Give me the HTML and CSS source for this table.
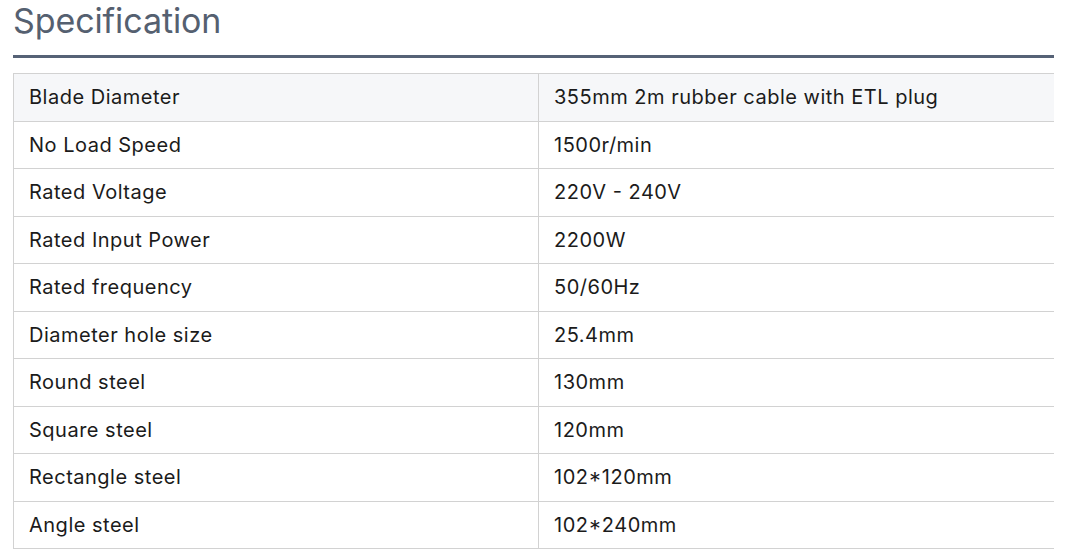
FILE: index.html
```html
<!DOCTYPE html>
<html>
<head>
<meta charset="utf-8">
<link rel="stylesheet" href="styles.css">
</head>
<body>
<div class="spec">
  <h2 class="spec-title">Specification</h2>
  <table class="spec-table">
    <tbody>
      <tr class="shaded"><td>Blade Diameter</td><td>355mm 2m rubber cable with ETL plug</td></tr>
      <tr><td>No Load Speed</td><td>1500r/min</td></tr>
      <tr><td>Rated Voltage</td><td>220V - 240V</td></tr>
      <tr><td>Rated Input Power</td><td>2200W</td></tr>
      <tr><td>Rated frequency</td><td>50/60Hz</td></tr>
      <tr><td>Diameter hole size</td><td>25.4mm</td></tr>
      <tr><td>Round steel</td><td>130mm</td></tr>
      <tr><td>Square steel</td><td>120mm</td></tr>
      <tr><td>Rectangle steel</td><td>102*120mm</td></tr>
      <tr><td>Angle steel</td><td>102*240mm</td></tr>
    </tbody>
  </table>
</div>
</body>
</html>
```
FILE: styles.css
```css
html, body {
  margin: 0;
  padding: 0;
  background: #ffffff;
}
body {
  font-family: Inter, "Noto Sans", sans-serif;
  color: #1b1b1b;
}
.spec {
  padding: 0 11px 0 13px;
}
.spec-title {
  margin: 0;
  font-size: 34px;
  font-weight: 400;
  line-height: 42px;
  color: #556070;
  padding-bottom: 13px;
  border-bottom: 3px solid #566276;
  letter-spacing: -0.1px;
}
.spec-table {
  margin-top: 15px;
  width: 100%;
  border-collapse: collapse;
  font-size: 20px;
  letter-spacing: 0.5px;
  font-feature-settings: "calt" 1, "liga" 1;
}
.spec-table td {
  border: 1px solid #d2d2d2;
  padding: 10px 15px;
  line-height: 26.5px;
  text-align: left;
  vertical-align: middle;
}
.spec-table td:first-child {
  width: 494px;
}
.spec-table td:last-child {
  border-right: none;
}
.spec-table tr.shaded td {
  background: #f6f7f9;
}
```
